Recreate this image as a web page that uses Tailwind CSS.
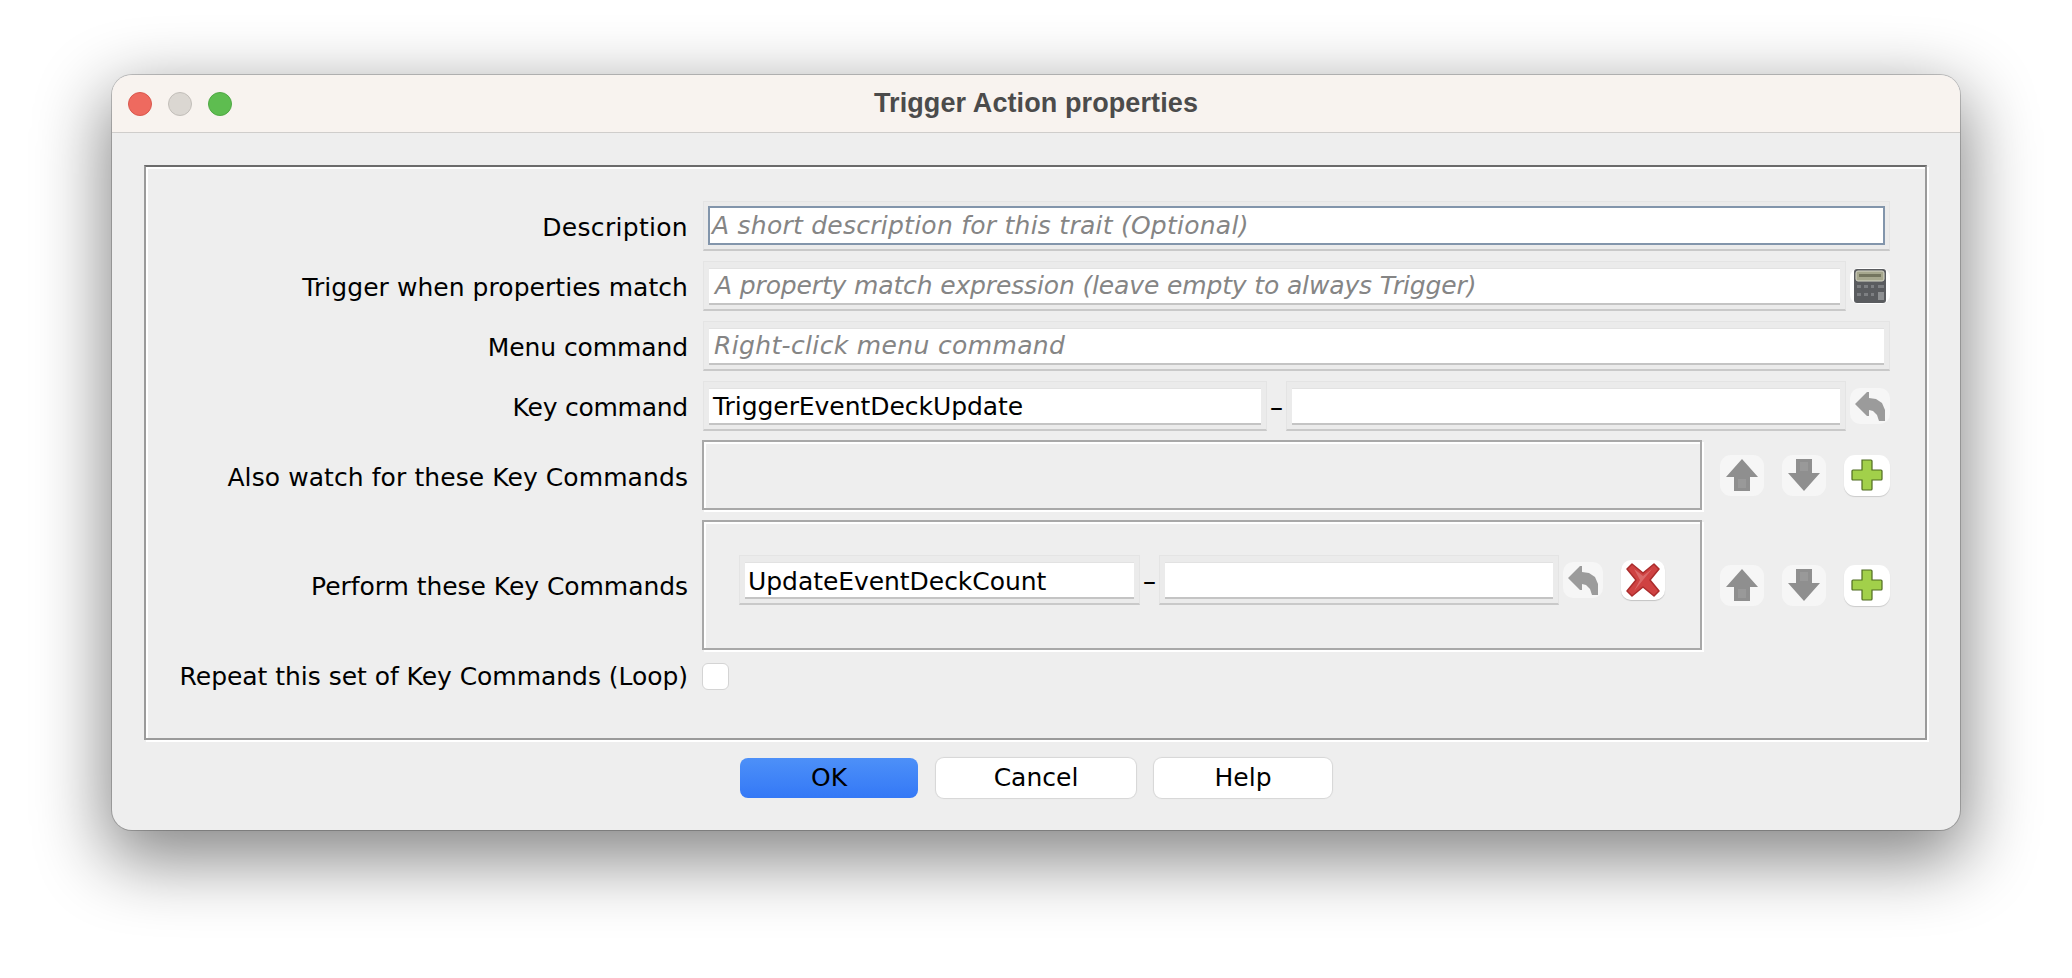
<!DOCTYPE html>
<html>
<head>
<meta charset="utf-8">
<script src="https://cdn.jsdelivr.net/npm/@tailwindcss/browser@4"></script>
</head>
<body class="bg-white w-[2072px] h-[978px] overflow-hidden font-['DejaVu_Sans',sans-serif] text-black">
<div class="pt-[75px] pl-[112px]">
  <div class="w-[1848px] h-[755px] rounded-[20px] bg-[#eeeeee] flex flex-col shadow-[0_0_0_1px_rgba(0,0,0,0.2),0_24px_70px_6px_rgba(0,0,0,0.48)] overflow-hidden">
    <!-- title bar -->
    <div class="h-[58px] shrink-0 bg-[#f8f3ef] border-b border-b-[#cfcdcb] grid grid-cols-[1fr_auto_1fr] items-center">
      <div class="flex gap-[16px] pl-[16px]">
        <div class="w-[24px] h-[24px] rounded-full bg-[#ee6a5f] border border-[#d9574d]"></div>
        <div class="w-[24px] h-[24px] rounded-full bg-[#dbd7d2] border border-[#c2beb9]"></div>
        <div class="w-[24px] h-[24px] rounded-full bg-[#5ebd50] border border-[#4fa844]"></div>
      </div>
      <div class="font-['Liberation_Sans',sans-serif] font-bold text-[27px] tracking-[0.1px] text-[#4b4b4b] leading-none">Trigger Action properties</div>
      <div></div>
    </div>
    <!-- panel -->
    <div class="ml-[32px] mt-[32px] w-[1783px] h-[575px] shrink-0 border-2 border-[#9a9a9a] border-t-[#6b6b6b] shadow-[inset_2px_2px_0_#fff,2px_2px_0_#fff] pt-[34px] flex flex-col gap-[10px] text-[25px]">
      <div class="flex items-center h-[50px]">
        <div class="w-[542px] text-right pt-[4px] shrink-0 tracking-[0.3px]">Description</div>
        <div class="ml-[15px] w-[1187px] h-[50px] bg-[#ebebeb] border border-[#e4e4e4] border-b-2 border-b-[#c9c9c9] p-[4px]">
          <div class="h-[39px] bg-white border-2 border-[#8295ab] flex items-center pl-[2px] italic text-[#858585] whitespace-nowrap tracking-[0.25px]">A short description for this trait (Optional)</div>
        </div>
      </div>
      <div class="flex items-center h-[50px]">
        <div class="w-[542px] text-right pt-[4px] shrink-0 tracking-[0.05px]">Trigger when properties match</div>
        <div class="ml-[15px] w-[1143px] h-[50px] bg-[#ebebeb] border border-[#e4e4e4] border-b-2 border-b-[#c9c9c9] pt-[6px] px-[5px]">
          <div class="h-[37px] bg-white border-t border-t-[#e2e2e2] border-b-2 border-b-[#c4c4c4] flex items-center pl-[6px] italic text-[#858585] whitespace-nowrap tracking-[-0.14px]">A property match expression (leave empty to always Trigger)</div>
        </div>
        <div class="ml-[4px] w-[40px] h-[36px] rounded-[9px] bg-white flex items-center justify-center">
          <svg width="32" height="34" viewBox="0 0 32 34">
            <rect width="32" height="34" rx="3" fill="#5a5c5f"/>
            <rect x="2" y="2" width="28" height="10" rx="2" fill="#a6a78e" stroke="#d6d6c8" stroke-width="1"/>
            <rect x="5" y="5" width="22" height="3" fill="#74755f"/>
            <g fill="#7d7f82">
              <rect x="3" y="16" width="4" height="3"/><rect x="10" y="16" width="4" height="3"/><rect x="17" y="16" width="3" height="3"/><rect x="24" y="16" width="6" height="3"/>
              <rect x="3" y="24" width="4" height="3"/><rect x="10" y="24" width="4" height="3"/><rect x="17" y="24" width="3" height="3"/><rect x="24" y="23" width="6" height="8" fill="#8e9092"/>
            </g>
          </svg>
        </div>
      </div>
      <div class="flex items-center h-[50px]">
        <div class="w-[542px] text-right pt-[4px] shrink-0 tracking-[-0.1px]">Menu command</div>
        <div class="ml-[15px] w-[1187px] h-[50px] bg-[#ebebeb] border border-[#e4e4e4] border-b-2 border-b-[#c9c9c9] pt-[6px] px-[5px]">
          <div class="h-[37px] bg-white border-t border-t-[#e2e2e2] border-b-2 border-b-[#c4c4c4] flex items-center pl-[5px] italic text-[#858585] whitespace-nowrap tracking-[0.35px]">Right-click menu command</div>
        </div>
      </div>
      <div class="flex items-center h-[50px]">
        <div class="w-[542px] text-right pt-[4px] shrink-0 tracking-[-0.24px]">Key command</div>
        <div class="ml-[15px] w-[564px] h-[50px] bg-[#ebebeb] border border-[#e4e4e4] border-b-2 border-b-[#c9c9c9] pt-[6px] px-[5px]">
          <div class="h-[37px] bg-white border-t border-t-[#e2e2e2] border-b-2 border-b-[#c4c4c4] flex items-center pl-[4px] pt-[1px] whitespace-nowrap tracking-[-0.05px]">TriggerEventDeckUpdate</div>
        </div>
        <div class="w-[19px] text-center pt-[4px]"><span class="inline-block scale-x-[1.6]">-</span></div>
        <div class="w-[560px] h-[50px] bg-[#ebebeb] border border-[#e4e4e4] border-b-2 border-b-[#c9c9c9] pt-[6px] px-[5px]">
          <div class="h-[37px] bg-white border-t border-t-[#e2e2e2] border-b-2 border-b-[#c4c4c4]"></div>
        </div>
        <div class="ml-[4px] w-[40px] h-[36px] rounded-[10px] bg-[#f6f6f6] flex items-center justify-center">
          <svg width="32" height="32" viewBox="0 0 32 32"><path d="M1 14 L13 2 L15 2 L15 8 L22 9 L28 13 L31 20 L31 31 L25 31 L23 25 L19 21 L15 20 L15 26 L13 26 Z" fill="#9b9b9b"/></svg>
        </div>
      </div>
      <div class="-mt-px flex items-center h-[70px]">
        <div class="w-[542px] text-right pt-[5px] shrink-0 tracking-[0.08px]">Also watch for these Key Commands</div>
        <div class="ml-[14px] w-[1000px] h-[70px] border-2 border-[#a8a8a8] shadow-[inset_2px_2px_0_#fff,2px_2px_0_#fff]"></div>
        <div class="ml-[18px] w-[44px] h-[41px] rounded-[11px] bg-[#f6f6f6] flex items-center justify-center">
          <svg width="32" height="32" viewBox="0 0 32 32"><path d="M16 0 L32 18 L24 18 L24 32 L8 32 L8 18 L0 18 Z" fill="#8f8f8f"/><path d="M12 20 H20 V29 H12Z" fill="#999"/></svg>
        </div>
        <div class="ml-[18px] w-[44px] h-[41px] rounded-[11px] bg-[#f6f6f6] flex items-center justify-center">
          <svg width="32" height="32" viewBox="0 0 32 32"><path d="M16 32 L32 14 L24 14 L24 0 L8 0 L8 14 L0 14 Z" fill="#8f8f8f"/><path d="M12 3 H20 V12 H12Z" fill="#999"/></svg>
        </div>
        <div class="ml-[18px] w-[46px] h-[41px] rounded-[11px] bg-white shadow-[0_1px_1px_rgba(0,0,0,0.15)] flex items-center justify-center">
          <svg width="32" height="32" viewBox="0 0 32 32"><path d="M11 1 H20 Q21 1 21 2 V11 H30 Q31 11 31 12 V20 Q31 21 30 21 H21 V30 Q21 31 20 31 H12 Q11 31 11 30 V21 H2 Q1 21 1 20 V12 Q1 11 2 11 H11 Z" fill="#a2d04a" stroke="#4f6b20" stroke-width="1.2"/></svg>
        </div>
      </div>
      <div class="flex items-center h-[130px]">
        <div class="w-[542px] text-right pt-[4px] shrink-0 tracking-[-0.05px]">Perform these Key Commands</div>
        <div class="ml-[14px] w-[1000px] h-[130px] border-2 border-[#a8a8a8] shadow-[inset_2px_2px_0_#fff,2px_2px_0_#fff] flex items-center pl-[35px] pb-[10px]">
          <div class="w-[401px] h-[50px] bg-[#ebebeb] border border-[#e4e4e4] border-b-2 border-b-[#c9c9c9] pt-[6px] px-[5px]">
            <div class="h-[37px] bg-white border-t border-t-[#e2e2e2] border-b-2 border-b-[#c4c4c4] flex items-center pl-[3px] pt-[3px] whitespace-nowrap tracking-[-0.05px]">UpdateEventDeckCount</div>
          </div>
          <div class="w-[19px] text-center pt-[4px]"><span class="inline-block scale-x-[1.6]">-</span></div>
          <div class="w-[400px] h-[50px] bg-[#ebebeb] border border-[#e4e4e4] border-b-2 border-b-[#c9c9c9] pt-[6px] px-[5px]">
            <div class="h-[37px] bg-white border-t border-t-[#e2e2e2] border-b-2 border-b-[#c4c4c4]"></div>
          </div>
          <div class="ml-[4px] w-[40px] h-[36px] rounded-[10px] bg-[#f6f6f6] flex items-center justify-center">
            <svg width="32" height="32" viewBox="0 0 32 32"><path d="M1 14 L13 2 L15 2 L15 8 L22 9 L28 13 L31 20 L31 31 L25 31 L23 25 L19 21 L15 20 L15 26 L13 26 Z" fill="#9b9b9b"/></svg>
          </div>
          <div class="ml-[18px] w-[44px] h-[40px] rounded-[10px] bg-white shadow-[0_1px_1px_rgba(0,0,0,0.18)] flex items-center justify-center">
            <svg width="34" height="34" viewBox="0 0 34 34"><path d="M6 1 L17 10 L28 1 L33 6 L24 17 L33 28 L28 33 L17 24 L6 33 L1 28 L10 17 L1 6 Z" fill="#cf4242" stroke="#ab2c2c" stroke-width="1.5" stroke-linejoin="round"/><path d="M8 6 L17 13 L26 6 L17 17 L8 28 L14 17 Z" fill="#e07a7a" opacity="0.7"/></svg>
          </div>
        </div>
        <div class="ml-[18px] w-[44px] h-[41px] rounded-[11px] bg-[#f6f6f6] flex items-center justify-center">
          <svg width="32" height="32" viewBox="0 0 32 32"><path d="M16 0 L32 18 L24 18 L24 32 L8 32 L8 18 L0 18 Z" fill="#8f8f8f"/><path d="M12 20 H20 V29 H12Z" fill="#999"/></svg>
        </div>
        <div class="ml-[18px] w-[44px] h-[41px] rounded-[11px] bg-[#f6f6f6] flex items-center justify-center">
          <svg width="32" height="32" viewBox="0 0 32 32"><path d="M16 32 L32 14 L24 14 L24 0 L8 0 L8 14 L0 14 Z" fill="#8f8f8f"/><path d="M12 3 H20 V12 H12Z" fill="#999"/></svg>
        </div>
        <div class="ml-[18px] w-[46px] h-[41px] rounded-[11px] bg-white shadow-[0_1px_1px_rgba(0,0,0,0.15)] flex items-center justify-center">
          <svg width="32" height="32" viewBox="0 0 32 32"><path d="M11 1 H20 Q21 1 21 2 V11 H30 Q31 11 31 12 V20 Q31 21 30 21 H21 V30 Q21 31 20 31 H12 Q11 31 11 30 V21 H2 Q1 21 1 20 V12 Q1 11 2 11 H11 Z" fill="#a2d04a" stroke="#4f6b20" stroke-width="1.2"/></svg>
        </div>
      </div>
      <div class="flex items-center h-[32px]">
        <div class="w-[542px] text-right pt-[2px] shrink-0 tracking-[-0.04px]">Repeat this set of Key Commands (Loop)</div>
        <div class="ml-[14px] w-[27px] h-[27px] rounded-[6px] bg-white border border-[#d4d4d4]"></div>
      </div>
    </div>
    <!-- buttons -->
    <div class="mt-[18px] flex justify-center gap-[18px] text-[25px]">
      <div class="w-[178px] h-[40px] rounded-[8px] bg-gradient-to-b from-[#4d90f8] to-[#3478f6] flex items-center justify-center">OK</div>
      <div class="w-[200px] h-[40px] rounded-[8px] bg-white shadow-[0_0_1px_1px_rgba(0,0,0,0.1)] flex items-center justify-center">Cancel</div>
      <div class="w-[178px] h-[40px] rounded-[8px] bg-white shadow-[0_0_1px_1px_rgba(0,0,0,0.1)] flex items-center justify-center">Help</div>
    </div>
  </div>
</div>
</body>
</html>
